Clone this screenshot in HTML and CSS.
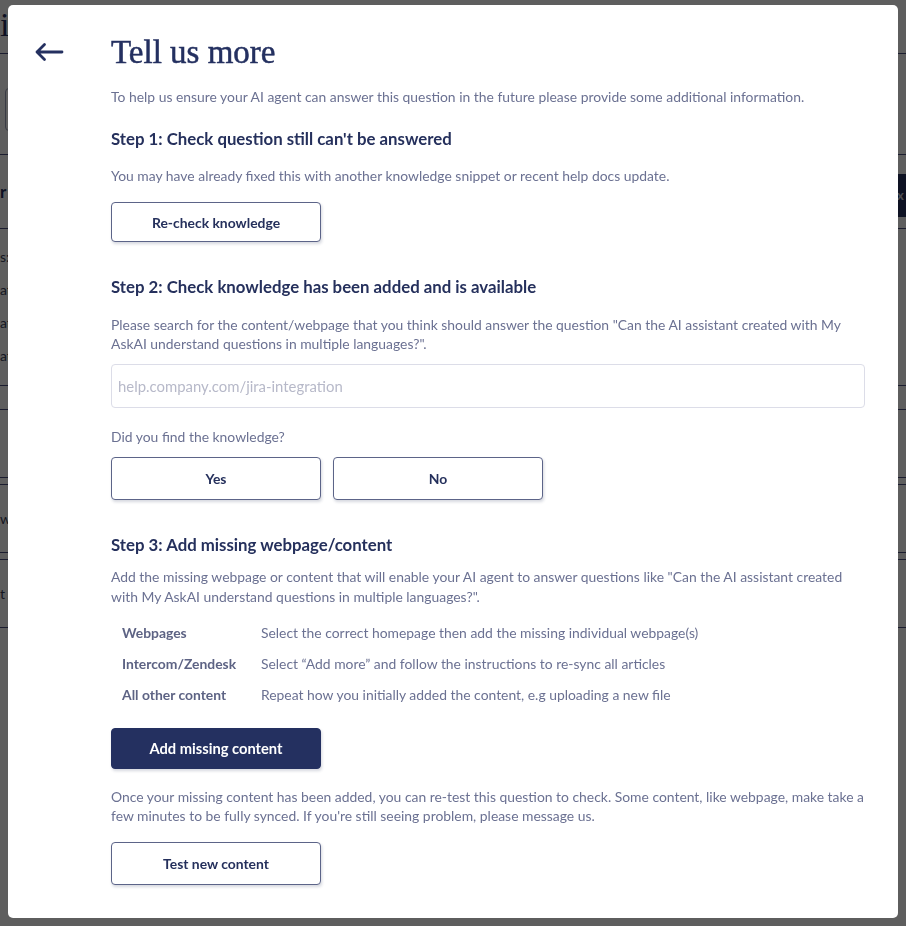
FILE: index.html
```html
<!DOCTYPE html>
<html lang="en">
<head>
<meta charset="utf-8">
<title>Tell us more</title>
<link rel="stylesheet" href="styles.css">
</head>
<body>
<div class="page">
  <div class="prow prow-1"><span class="ptitle">in</span></div>
  <div class="prow prow-2"><div class="pinput"></div></div>
  <div class="prow prow-3"><span class="pbold">r</span><span class="pbtn">x</span></div>
  <div class="prow prow-4">
    <span class="ptext">s:</span>
    <span class="ptext">at</span>
    <span class="ptext">at</span>
    <span class="ptext">at</span>
  </div>
  <div class="prow prow-5"></div>
  <div class="prow prow-6"></div>
  <div class="prow prow-7"></div>
  <div class="prow prow-8"><span class="ptext">w</span></div>
  <div class="prow prow-9"></div>
  <div class="prow prow-10"><span class="ptext">t</span></div>
</div>
<div class="overlay"></div>

<div class="modal">
  <div class="back">
    <svg width="30" height="20" viewBox="0 0 30 20" aria-hidden="true">
      <path d="M28 10 H3 M10.5 2.5 L3 10 L10.5 17.5" fill="none" stroke="#243060" stroke-width="2.8" stroke-linecap="round" stroke-linejoin="round"/>
    </svg>
  </div>
  <div class="content">
    <h1 class="title">Tell us more</h1>
    <p class="text intro">To help us ensure your AI agent can answer this question in the future please provide some additional information.</p>

    <h2 class="step step-1">Step 1: Check question still can't be answered</h2>
    <p class="text s1-text">You may have already fixed this with another knowledge snippet or recent help docs update.</p>
    <button class="btn btn-outline btn-recheck">Re-check knowledge</button>

    <h2 class="step step-2">Step 2: Check knowledge has been added and is available</h2>
    <p class="text s2-text">Please search for the content/webpage that you think should answer the question "Can the AI assistant created with My AskAI understand questions in multiple languages?".</p>
    <input class="search" type="text" placeholder="help.company.com/jira-integration">
    <p class="text found">Did you find the knowledge?</p>
    <div class="choices">
      <button class="btn btn-outline btn-choice">Yes</button>
      <button class="btn btn-outline btn-choice">No</button>
    </div>

    <h2 class="step step-3">Step 3: Add missing webpage/content</h2>
    <p class="text s3-text">Add the missing webpage or content that will enable your AI agent to answer questions like "Can the AI assistant created with My AskAI understand questions in multiple languages?".</p>
    <div class="sources">
      <div class="src-label">Webpages</div>
      <div class="src-desc">Select the correct homepage then add the missing individual webpage(s)</div>
      <div class="src-label">Intercom/Zendesk</div>
      <div class="src-desc">Select “Add more” and follow the instructions to re-sync all articles</div>
      <div class="src-label">All other content</div>
      <div class="src-desc">Repeat how you initially added the content, e.g uploading a new file</div>
    </div>
    <button class="btn btn-primary">Add missing content</button>
    <p class="text retest">Once your missing content has been added, you can re-test this question to check. Some content, like webpage, make take a few minutes to be fully synced. If you're still seeing problem, please message us.</p>
    <button class="btn btn-outline btn-test">Test new content</button>
  </div>
</div>
</body>
</html>
```

FILE: styles.css
```css
* { box-sizing: border-box; }

html, body {
  margin: 0;
  padding: 0;
}

body {
  width: 906px;
  height: 926px;
  overflow: hidden;
  background: #ffffff;
  font-family: Lato, "Noto Sans", "Liberation Sans", sans-serif;
}

/* ---------- dimmed page behind the modal ---------- */
.page {
  display: flex;
  flex-direction: column;
  width: 906px;
}

.prow {
  border-bottom: 1px solid #4a5080;
  display: flex;
  flex-direction: column;
}

.prow-1 { height: 54px; }
.prow-2 { height: 101px; padding-top: 34px; padding-left: 5px; }
.prow-3 { height: 74px; flex-direction: row; justify-content: space-between; align-items: center; }
.prow-4 { height: 157px; padding-top: 18px; gap: 14px; }
.prow-5 { height: 24px; }
.prow-6 { height: 68px; }
.prow-7 { height: 7px; }
.prow-8 { height: 68px; justify-content: center; }
.prow-9 { height: 7px; }
.prow-10 { height: 68px; justify-content: center; }

.ptitle {
  font-family: "Liberation Serif", serif;
  font-size: 34px;
  line-height: 40px;
  margin-top: 5px;
  color: #243060;
}

.pinput {
  width: 300px;
  height: 43px;
  border: 1px solid #9aa0b8;
  border-radius: 4px;
}

.pbold {
  font-weight: 700;
  font-size: 17px;
  color: #243060;
}

.pbtn {
  height: 43px;
  width: 9px;
  margin-top: 7px;
  background: #26335f;
  color: #d0d4e0;
  font-weight: 700;
  font-size: 13px;
  line-height: 43px;
  overflow: hidden;
}

.ptext {
  font-size: 14px;
  line-height: 19px;
  color: #3a3f5a;
}

.overlay {
  position: fixed;
  inset: 0;
  background: rgba(0, 0, 0, 0.63);
}

/* ---------- modal ---------- */
.modal {
  position: absolute;
  left: 8px;
  top: 5px;
  width: 890px;
  height: 913px;
  background: #ffffff;
  border-radius: 5px;
  display: grid;
  grid-template-columns: 103px 1fr;
  padding: 29px 33px 0 0;
  color: #6b7192;
}

.back {
  padding-left: 26px;
  padding-top: 8px;
}

.back svg { display: block; }

.content {
  display: flex;
  flex-direction: column;
  align-items: flex-start;
}

.title {
  margin: 0;
  font-family: "Liberation Serif", "DejaVu Serif", serif;
  font-weight: 400;
  font-size: 33px;
  line-height: 36px;
  color: #243060;
  -webkit-text-stroke: 0.5px #243060;
}

.text {
  margin: 0;
  font-size: 13.9px;
  line-height: 19px;
  color: #6b7192;
}

.intro { margin-top: 16.5px; }

.step {
  margin: 0;
  font-size: 16.8px;
  line-height: 22px;
  font-weight: 700;
  color: #25305c;
}

.step-1 { margin-top: 22.5px; }
.s1-text { margin-top: 15.5px; }
.btn-recheck { margin-top: 17.5px; height: 40px; }

.step-2 { margin-top: 34px; }
.s2-text { margin-top: 16.5px; }

.search {
  margin-top: 11.5px;
  width: 754px;
  height: 44px;
  border: 1px solid #dcdde8;
  border-radius: 4px;
  padding: 0 6px;
  font-family: Lato, "Noto Sans", sans-serif;
  font-size: 14.9px;
  color: #6b7192;
  outline: none;
}

.search::placeholder { color: #b7b9c9; }

.found { margin-top: 18.5px; }

.choices {
  margin-top: 11.5px;
  display: flex;
  gap: 12px;
}

.btn {
  width: 210px;
  border-radius: 4px;
  font-family: Lato, "Noto Sans", sans-serif;
  font-size: 13.9px;
  font-weight: 700;
  cursor: pointer;
  box-shadow: 1px 2px 3px rgba(30, 40, 80, 0.18);
  padding: 0;
}

.btn-outline {
  background: #ffffff;
  border: 1px solid #5c6488;
  color: #25305c;
}

.btn-choice { height: 43px; }

.step-3 { margin-top: 34px; }

.s3-text {
  margin-top: 10.5px;
  line-height: 20px;
}

.sources {
  margin-top: 10.5px;
  display: grid;
  grid-template-columns: 139px auto;
  grid-auto-rows: 31px;
  align-items: center;
  padding-left: 11px;
  font-size: 13.9px;
}

.src-label {
  font-weight: 700;
  color: #5d6384;
}

.src-desc { color: #6b7192; }

.btn-primary {
  margin-top: 17.5px;
  height: 41px;
  background: #243060;
  border: 1px solid #243060;
  color: #ffffff;
  font-size: 14.7px;
}

.retest { margin-top: 18.5px; }

.btn-test {
  margin-top: 16.5px;
  height: 43px;
}
```
